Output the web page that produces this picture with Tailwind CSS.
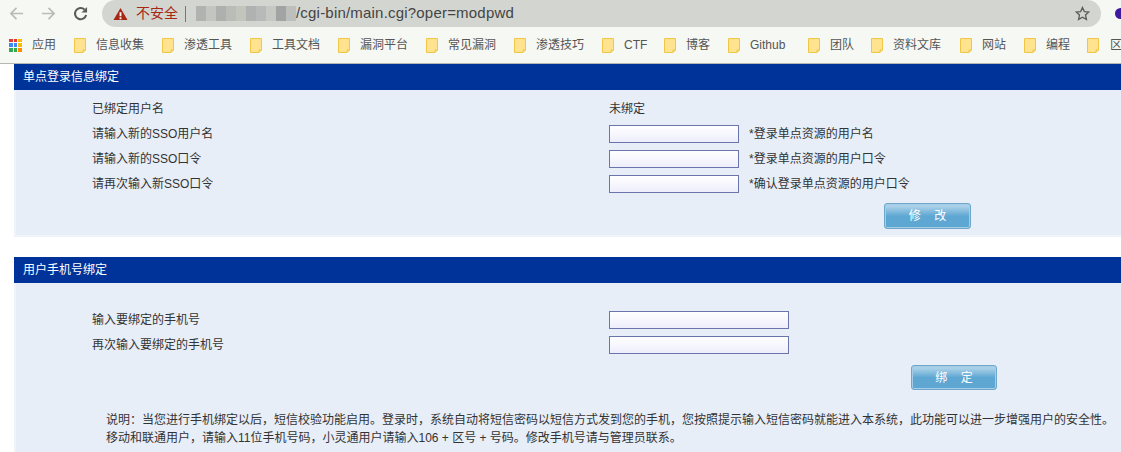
<!DOCTYPE html>
<html lang="zh-CN">
<head>
    <meta charset="UTF-8">
    <title>main.cgi</title>
    <script src="https://cdn.jsdelivr.net/npm/@tailwindcss/browser@4"></script>
</head>
<body class="w-[1121px] h-[452px] overflow-hidden bg-white text-[12px] text-[#333] font-['Liberation_Sans','Noto_Sans_CJK_SC',sans-serif]">
    <svg class="hidden">
        <symbol id="folder" viewBox="0 0 12 15"><path d="M.5.5h11v11.500l-2.500 2.500H.5Z" fill="#ffe38f" stroke="#f0c648"/><path d="M9 14.500v-2.500h2.500" fill="none" stroke="#f0c648"/></symbol>
    </svg>

    <!-- browser toolbar -->
    <div class="h-[27px] bg-[#f6f8f4] flex items-start">
        <div class="w-[102px] h-[27px] flex items-center shrink-0">
            <svg class="ml-[9px]" width="15" height="15" viewBox="0 0 16 16" fill="none" stroke="#b9bbb8" stroke-width="1.8"><path d="M15 8H2M8 2 2 8l6 6"/></svg>
            <svg class="ml-[17px]" width="15" height="15" viewBox="0 0 16 16" fill="none" stroke="#b9bbb8" stroke-width="1.8"><path d="M1 8h13M8 2l6 6-6 6"/></svg>
            <svg class="ml-[17px]" width="15" height="15" viewBox="0 0 16 16" fill="none" stroke="#5a5c5a" stroke-width="2.200"><path d="M14 9.500A6 6 0 1 1 12.300 3.800"/><path d="M15 1v6H9Z" fill="#5a5c5a" stroke="none"/></svg>
        </div>
        <div class="w-[999px] h-[27px] bg-[#d3d6d0] rounded-[14px] flex items-center shrink-0">
            <svg class="ml-[11px]" width="15" height="14" viewBox="0 0 16 14"><path d="M8 0.500 15.500 13.500H.5Z" fill="#a52714"/><path d="M7 5h2v4.500H7zM7 10.500h2v2H7z" fill="#f6f8f4"/></svg>
            <span class="ml-[8px] text-[14px] text-[#a52714] whitespace-nowrap">不安全</span>
            <div class="ml-[7px] w-px h-[16px] bg-[#777]"></div>
            <div class="ml-[10px] flex h-[15px] w-[100px] opacity-80">
                <div class="flex-1 bg-[#a9abaa]"></div><div class="flex-1 bg-[#c0c2bd]"></div><div class="flex-1 bg-[#a5a7a5]"></div><div class="flex-1 bg-[#b4b6b3]"></div><div class="flex-1 bg-[#bfc2b6]"></div><div class="flex-1 bg-[#a8a9aa]"></div><div class="flex-1 bg-[#b2b4b4]"></div><div class="flex-1 bg-[#c3c6c1]"></div><div class="flex-1 bg-[#97989a]"></div><div class="flex-1 bg-[#b8bab8]"></div>
            </div>
            <span class="text-[15px] text-[#444] whitespace-nowrap tracking-[0.2px]">/cgi-bin/main.cgi?oper=modpwd</span>
            <svg class="ml-auto mr-[11px]" width="15" height="15" viewBox="0 0 16 16" fill="none" stroke="#5a5c5a" stroke-width="1.4"><path d="m8 1.500 2 4.400 4.700.5-3.500 3.200 1 4.700L8 11.900l-4.200 2.400 1-4.700L1.300 6.400 6 5.900Z"/></svg>
        </div>
        <div class="ml-[14px] mt-[8px] w-[6px] h-[11px] rounded-l-full bg-[#3d1a9e]"></div>
    </div>

    <!-- bookmarks bar -->
    <div class="h-[37px] bg-[#f6f8f4] border-b border-[#b5b7b5] flex items-center text-[#555] whitespace-nowrap overflow-hidden">
        <div class="ml-[9px] w-[13px] h-[13px] grid grid-cols-3 gap-[1px] shrink-0">
            <i class="bg-[#e53935]"></i><i class="bg-[#e53935]"></i><i class="bg-[#fbbc05]"></i>
            <i class="bg-[#4285f4]"></i><i class="bg-[#4285f4]"></i><i class="bg-[#fbbc05]"></i>
            <i class="bg-[#34a853]"></i><i class="bg-[#34a853]"></i><i class="bg-[#fb8c00]"></i>
        </div>
        <span class="ml-[10px] w-[42px] shrink-0">应用</span>
        <div class="flex shrink-0">
            <div class="w-[88px] flex items-center gap-[10px]"><svg width="12" height="15"><use href="#folder"/></svg>信息收集</div>
            <div class="w-[88px] flex items-center gap-[10px]"><svg width="12" height="15"><use href="#folder"/></svg>渗透工具</div>
            <div class="w-[88px] flex items-center gap-[10px]"><svg width="12" height="15"><use href="#folder"/></svg>工具文档</div>
            <div class="w-[88px] flex items-center gap-[10px]"><svg width="12" height="15"><use href="#folder"/></svg>漏洞平台</div>
            <div class="w-[88px] flex items-center gap-[10px]"><svg width="12" height="15"><use href="#folder"/></svg>常见漏洞</div>
            <div class="w-[88px] flex items-center gap-[10px]"><svg width="12" height="15"><use href="#folder"/></svg>渗透技巧</div>
            <div class="w-[62px] flex items-center gap-[10px]"><svg width="12" height="15"><use href="#folder"/></svg>CTF</div>
            <div class="w-[64px] flex items-center gap-[10px]"><svg width="12" height="15"><use href="#folder"/></svg>博客</div>
            <div class="w-[80px] flex items-center gap-[10px]"><svg width="12" height="15"><use href="#folder"/></svg>Github</div>
            <div class="w-[63px] flex items-center gap-[10px]"><svg width="12" height="15"><use href="#folder"/></svg>团队</div>
            <div class="w-[89px] flex items-center gap-[10px]"><svg width="12" height="15"><use href="#folder"/></svg>资料文库</div>
            <div class="w-[64px] flex items-center gap-[10px]"><svg width="12" height="15"><use href="#folder"/></svg>网站</div>
            <div class="w-[63px] flex items-center gap-[10px]"><svg width="12" height="15"><use href="#folder"/></svg>编程</div>
            <div class="w-[70px] flex items-center gap-[11px]"><svg width="12" height="15"><use href="#folder"/></svg>区块链</div>
        </div>
    </div>

    <!-- page -->
    <div class="ml-[14px]">
        <h2 class="h-[26px] bg-[#003399] text-white font-normal pl-[9px] leading-[26px]">单点登录信息绑定</h2>
        <div class="h-[147px] bg-[#e7eef8] border-2 border-t-0 border-r-0 border-[#eff3fa] pl-[76px] pt-[6px]">
            <div class="flex h-[25px] items-center"><span class="w-[517px]">已绑定用户名</span><span>未绑定</span></div>
            <div class="flex h-[25px] items-center"><span class="w-[517px]">请输入新的SSO用户名</span><input class="w-[130px] h-[18px] border border-[#6a76ab] bg-linear-to-b from-white to-[#eeeefc]" type="text"><span class="ml-[10px]">*登录单点资源的用户名</span></div>
            <div class="flex h-[25px] items-center"><span class="w-[517px]">请输入新的SSO口令</span><input class="w-[130px] h-[18px] border border-[#6a76ab] bg-linear-to-b from-white to-[#eeeefc]" type="password"><span class="ml-[10px]">*登录单点资源的用户口令</span></div>
            <div class="flex h-[25px] items-center"><span class="w-[517px]">请再次输入新SSO口令</span><input class="w-[130px] h-[18px] border border-[#6a76ab] bg-linear-to-b from-white to-[#eeeefc]" type="password"><span class="ml-[10px]">*确认登录单点资源的用户口令</span></div>
            <button class="block ml-[792px] mt-[7px] w-[87px] h-[26px] rounded-[3px] border border-[#6fa6cb] shadow-[inset_0_0_0_1px_#a5cde6] bg-linear-to-b from-[#a9d0e8] from-10% via-[#5ea7d2] via-50% to-[#5ea7d2] text-white">修&nbsp;&nbsp;&nbsp;&nbsp;改</button>
        </div>

        <h2 class="mt-[20px] h-[26px] bg-[#003399] text-white font-normal pl-[9px] leading-[26px]">用户手机号绑定</h2>
        <div class="h-[169px] bg-[#e7eef8] border-l-2 border-[#eff3fa] pl-[76px] pt-[24px]">
            <div class="flex h-[25px] items-center"><span class="w-[517px]">输入要绑定的手机号</span><input class="w-[180px] h-[18px] border border-[#6a76ab] bg-linear-to-b from-white to-[#eeeefc]" type="text"></div>
            <div class="flex h-[25px] items-center"><span class="w-[517px]">再次输入要绑定的手机号</span><input class="w-[180px] h-[18px] border border-[#6a76ab] bg-linear-to-b from-white to-[#eeeefc]" type="text"></div>
            <button class="block ml-[819px] mt-[8px] w-[86px] h-[25px] rounded-[3px] border border-[#6fa6cb] shadow-[inset_0_0_0_1px_#a5cde6] bg-linear-to-b from-[#a9d0e8] from-10% via-[#5ea7d2] via-50% to-[#5ea7d2] text-white">绑&nbsp;&nbsp;&nbsp;&nbsp;定</button>
            <p class="ml-[14px] mt-[21px] leading-[18px] whitespace-nowrap">说明：当您进行手机绑定以后，短信校验功能启用。登录时，系统自动将短信密码以短信方式发到您的手机，您按照提示输入短信密码就能进入本系统，此功能可以进一步增强用户的安全性。<br>移动和联通用户，请输入11位手机号码，小灵通用户请输入106 + 区号 + 号码。修改手机号请与管理员联系。</p>
        </div>
    </div>
</body>
</html>
